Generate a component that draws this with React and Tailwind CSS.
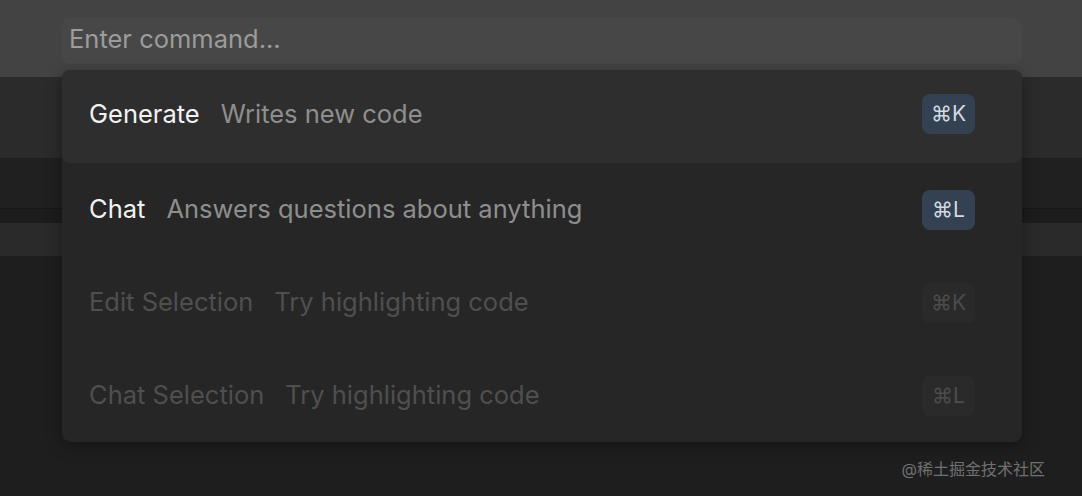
import React from "react";

const commands = [
  { title: "Generate", desc: "Writes new code", key: "K", active: true, enabled: true },
  { title: "Chat", desc: "Answers questions about anything", key: "L", enabled: true },
  { title: "Edit Selection", desc: "Try highlighting code", key: "K" },
  { title: "Chat Selection", desc: "Try highlighting code", key: "L" },
];

function CommandRow({ item }) {
  return (
    <div
      className={`flex items-center h-[93px] pl-[27px] pr-[47px] ${
        item.active ? "bg-[#2e2e2e] rounded-[8px] pb-[5px]" : ""
      }`}
    >
      <span className={`text-[25.5px] ${item.enabled ? "text-[#f2f2f2]" : "text-[#4f4f4f]"}`}>
        {item.title}
      </span>
      <span className={`ml-[21px] text-[25.5px] ${item.enabled ? "text-[#8e8e8e]" : "text-[#4f4f4f]"}`}>
        {item.desc}
      </span>
      <span
        className={`ml-auto flex items-center justify-center w-[53px] h-[40px] rounded-[8px] text-[21px] ${
          item.enabled ? "bg-[#334152] text-[#d3d9e0]" : "bg-[#2a2a2a] text-[#4c4c4c]"
        }`}
      >
        ⌘{item.key}
      </span>
    </div>
  );
}

export default function App() {
  return (
    <div
      className="relative w-[1082px] h-[496px] overflow-hidden bg-[#1e1e1e]"
      style={{ fontFamily: "Inter, 'Noto Sans CJK SC', sans-serif" }}
    >
      {/* editor background bands */}
      <div className="flex flex-col">
        <div className="h-[77px] bg-[#434343]" />
        <div className="h-[81px] bg-[#2b2b2b]" />
        <div className="h-[50px] bg-[#202020]" />
        <div className="h-[15px] bg-[#1c1c1c] border-t border-[#161616]" />
        <div className="h-[33px] bg-[#2a2a2a]" />
      </div>

      {/* command palette */}
      <div className="absolute left-[62px] top-[18px] w-[960px] flex flex-col gap-[6px]">
        <div className="h-[46px] rounded-[7px] bg-[#474747] flex items-center px-[7px] pb-[3px] text-[25.5px] text-[#9c9c9c]">
          Enter command...
        </div>
        <div className="rounded-[9px] bg-[#262626] shadow-[0_4px_16px_rgba(0,0,0,0.35)]">
          {commands.map((c) => (
            <CommandRow key={c.title} item={c} />
          ))}
        </div>
      </div>

      <div className="absolute right-[37px] top-[457px] text-[16px] text-[#707070]">
        @稀土掘金技术社区
      </div>
    </div>
  );
}
